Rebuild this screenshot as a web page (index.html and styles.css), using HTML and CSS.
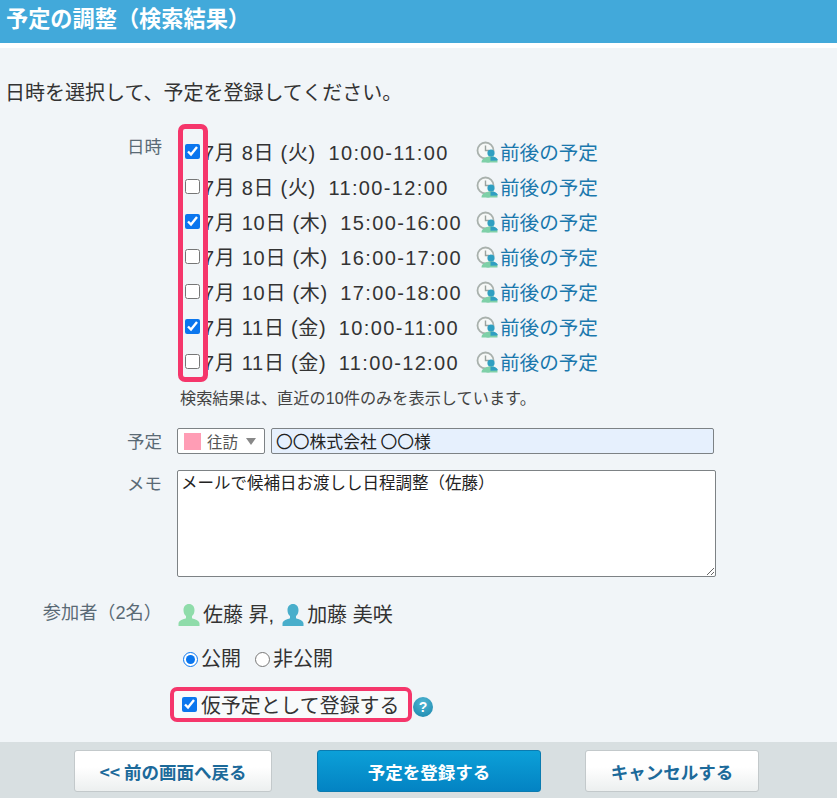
FILE: index.html
```html
<!DOCTYPE html>
<html lang="ja">
<head>
<meta charset="utf-8">
<title>予定の調整</title>
<link rel="stylesheet" href="styles.css">
</head>
<body>
<header class="title-bar"><h1>予定の調整（検索結果）</h1></header>
<main class="content">
  <p class="lead">日時を選択して、予定を登録してください。</p>
  <div class="form-row row-dates">
    <div class="label">日時</div>
    <div class="value">
      <div class="dates">
        <span class="highlight highlight-dates"></span>
        <div class="date-row"><input type="checkbox" class="check" checked><span class="date">7月 8日 (火)&nbsp; <span class="time">10:00-11:00</span></span><span class="link"><svg class="clock" viewBox="0 0 22 22"><use href="#clock-user"/></svg><a>前後の予定</a></span></div>
        <div class="date-row"><input type="checkbox" class="check"><span class="date">7月 8日 (火)&nbsp; <span class="time">11:00-12:00</span></span><span class="link"><svg class="clock" viewBox="0 0 22 22"><use href="#clock-user"/></svg><a>前後の予定</a></span></div>
        <div class="date-row"><input type="checkbox" class="check" checked><span class="date">7月 10日 (木)&nbsp; <span class="time">15:00-16:00</span></span><span class="link"><svg class="clock" viewBox="0 0 22 22"><use href="#clock-user"/></svg><a>前後の予定</a></span></div>
        <div class="date-row"><input type="checkbox" class="check"><span class="date">7月 10日 (木)&nbsp; <span class="time">16:00-17:00</span></span><span class="link"><svg class="clock" viewBox="0 0 22 22"><use href="#clock-user"/></svg><a>前後の予定</a></span></div>
        <div class="date-row"><input type="checkbox" class="check"><span class="date">7月 10日 (木)&nbsp; <span class="time">17:00-18:00</span></span><span class="link"><svg class="clock" viewBox="0 0 22 22"><use href="#clock-user"/></svg><a>前後の予定</a></span></div>
        <div class="date-row"><input type="checkbox" class="check" checked><span class="date">7月 11日 (金)&nbsp; <span class="time">10:00-11:00</span></span><span class="link"><svg class="clock" viewBox="0 0 22 22"><use href="#clock-user"/></svg><a>前後の予定</a></span></div>
        <div class="date-row"><input type="checkbox" class="check"><span class="date">7月 11日 (金)&nbsp; <span class="time">11:00-12:00</span></span><span class="link"><svg class="clock" viewBox="0 0 22 22"><use href="#clock-user"/></svg><a>前後の予定</a></span></div>
      </div>
      <p class="note">検索結果は、直近の10件のみを表示しています。</p>
    </div>
  </div>
  <div class="form-row row-title">
    <div class="label label-title">予定</div>
    <div class="value inline">
      <div class="menu"><span class="swatch"></span><span class="menu-text">往訪</span><span class="caret"></span></div>
      <input class="title-input" type="text" value="〇〇株式会社 〇〇様">
    </div>
  </div>
  <div class="form-row row-memo">
    <div class="label label-memo">メモ</div>
    <div class="value"><textarea class="memo">メールで候補日お渡しし日程調整（佐藤）</textarea></div>
  </div>
  <div class="form-row row-people">
    <div class="label label-people">参加者（2名）</div>
    <div class="value people">
      <svg class="user" viewBox="0 0 22 24"><use href="#user-shape" class="user-green"/></svg><span>佐藤 昇,</span>
      <svg class="user second" viewBox="0 0 22 24"><use href="#user-shape" class="user-blue"/></svg><span>加藤 美咲</span>
    </div>
  </div>
  <div class="form-row row-radio">
    <div class="label"></div>
    <div class="value radios">
      <label class="radio"><input type="radio" name="vis" checked>公開</label>
      <label class="radio"><input type="radio" name="vis">非公開</label>
    </div>
  </div>
  <div class="form-row row-tentative">
    <div class="label"></div>
    <div class="value tentative">
      <label class="tentative-box"><input type="checkbox" class="check" checked>仮予定として登録する</label>
      <span class="help">?</span>
    </div>
  </div>
</main>
<footer class="actions">
  <button class="btn btn-back" type="button">&lt;&lt; 前の画面へ戻る</button>
  <button class="btn btn-primary" type="button">予定を登録する</button>
  <button class="btn btn-cancel" type="button">キャンセルする</button>
</footer>
<svg class="defs" width="0" height="0" aria-hidden="true">
  <symbol id="clock-user" viewBox="0 0 22 22">
    <circle cx="9.500" cy="9.500" r="8" fill="#f6f8f7" stroke="#a9b1ad" stroke-width="1.800"/>
    <path d="M9.500 4.500v5h3.500" fill="none" stroke="#9aa39f" stroke-width="1.400"/>
    <circle cx="15" cy="12" r="3.600" fill="#2f9fc2"/>
    <path d="M5.500 21.500c0-3.300 2.800-4.500 5-5.200l3 .5v4.700z" fill="#7fd0a8"/>
    <path d="M10.500 21.500v-5.200c1-.6 1.800-.8 2.500-.8h4c2 .8 4.500 2 4.500 5v1z" fill="#7fd0a8"/>
    <path d="M14.500 15.500h3c1.500.5 3 1.200 4 2.800v1.200l-7 .2z" fill="#2f9fc2"/>
  </symbol>
  <symbol id="user-shape" viewBox="0 0 22 24">
    <path d="M11 1c3.300 0 5.500 2.500 5.500 6.200 0 2.500-1 4.600-2.500 5.800v2.200c2.500 1 7.500 1.900 7.500 5.300v2.500H.5V20.500c0-3.400 5-4.300 7.500-5.300V13C6.500 11.800 5.500 9.700 5.500 7.200 5.500 3.500 7.700 1 11 1z"/>
  </symbol>
</svg>
</body>
</html>
```
FILE: styles.css
```css
* { box-sizing: border-box; }
html, body { margin: 0; padding: 0; }
body {
  width: 837px;
  height: 798px;
  overflow: hidden;
  background: #f1f5f8;
  color: #333;
  font-family: "Liberation Sans", "Noto Sans CJK JP", sans-serif;
  display: flex;
  flex-direction: column;
}
.title-bar {
  height: 48px;
  background: #42a9da;
  border-bottom: 5px solid #fff;
  padding-left: 6px;
}
.title-bar h1 {
  margin: 0;
  font-size: 22.200px;
  line-height: 40px;
  font-weight: 700;
  color: #fff;
}
.content { flex: 1; }
.lead {
  margin: 31px 0 0 5px;
  font-size: 20px;
  line-height: 28px;
  height: 28px;
}
.form-row { display: flex; }
.label {
  width: 162px;
  flex: none;
  text-align: right;
  font-size: 17.500px;
  line-height: 24px;
  color: #5a6a75;
}
.label-title, .label-memo { padding-top: 2px; }
.label-people { font-size: 18.200px; padding-right: 0; }
.value { margin-left: 15px; }
.row-dates { margin-top: 27px; }
.row-dates .label { padding-top: 1px; }
.dates { position: relative; }
.highlight-dates {
  position: absolute;
  left: 1px;
  top: -10px;
  width: 30px;
  height: 258px;
  border: 5px solid #f5366b;
  border-radius: 7px;
}
.date-row {
  display: flex;
  align-items: center;
  height: 35px;
  font-size: 20px;
  letter-spacing: 0.7px;
  color: #333;
}
.time { letter-spacing: 1.350px; }
.check {
  width: 15px;
  height: 15px;
  margin: 0 3px 0 8px;
  flex: none;
  accent-color: #0b76ee;
}
.date { width: 273px; white-space: nowrap; }
.link { display: flex; align-items: center; letter-spacing: 0; }
.clock { width: 22px; height: 22px; margin-right: 2px; }
.link a { color: #1b78ad; font-size: 19.600px; }
.note {
  margin: 9px 0 0 3px;
  font-size: 16.200px;
  line-height: 20px;
  color: #444;
  white-space: nowrap;
}
.row-title { margin-top: 20px; }
.inline { display: flex; gap: 6px; margin-left: 15px; }
.menu {
  width: 88px;
  height: 26px;
  background: #fff;
  border: 1px solid #7d8285;
  border-radius: 2px;
  display: flex;
  align-items: center;
  padding-left: 6px;
  font-size: 15.500px;
  color: #555;
}
.swatch { width: 17px; height: 17px; background: #ff9db5; margin-right: 6px; }
.caret {
  margin-left: 8px;
  border-left: 5px solid transparent;
  border-right: 5px solid transparent;
  border-top: 7px solid #888;
}
.title-input {
  width: 443px;
  height: 26px;
  margin: 0;
  border: 1px solid #7d8285;
  border-radius: 2px;
  background: #e6f0fd;
  font: 16.800px "Noto Sans CJK JP", sans-serif;
  color: #222;
  padding: 0 4px;
}
.row-memo { margin-top: 16px; }
.memo {
  display: block;
  width: 539px;
  height: 107px;
  margin: 0;
  border: 1px solid #7d8285;
  border-radius: 2px;
  background: #fff;
  font: 16.500px/20px "Noto Sans CJK JP", sans-serif;
  color: #222;
  padding: 1px 3px;
}
.row-people { margin-top: 24px; }
.people {
  display: flex;
  align-items: center;
  font-size: 20px;
  line-height: 28px;
  color: #333;
  margin-left: 16px;
}
.user { width: 22px; height: 24px; margin-right: 3px; flex: none; }
.user.second { margin-left: 8px; }
.user-green { fill: #8fdcaa; }
.user-blue { fill: #49aecb; }
.row-radio { margin-top: 16px; }
.radios { display: flex; gap: 14px; margin-left: 21px; font-size: 20px; line-height: 28px; }
.radio { display: flex; align-items: center; }
.radio input { width: 15px; height: 15px; margin: 0 3px 0 0; accent-color: #0b76ee; }
.row-tentative { margin-top: 14px; }
.tentative { display: flex; align-items: center; margin-left: 8px; }
.tentative-box {
  display: flex;
  align-items: center;
  width: 242px;
  height: 35px;
  border: 4px solid #f5366b;
  border-radius: 7px;
  font-size: 19.900px;
  background: #f8fafb;
  color: #333;
}
.tentative-box .check { margin: 0 4px 0 8px; }
.help {
  width: 20px;
  height: 20px;
  margin-left: 1px;
  margin-top: 5px;
  border-radius: 50%;
  background: radial-gradient(circle at 50% 30%, #4fb6d4, #1a85ab);
  color: #fff;
  font: 700 14px/20px "Liberation Sans", sans-serif;
  text-align: center;
}
.actions {
  height: 56px;
  background: #d8dfe1;
  display: flex;
  gap: 44px;
  padding: 8px 0 0 74px;
}
.btn {
  height: 42px;
  border-radius: 3px;
  font: 700 17.500px "Noto Sans CJK JP", sans-serif;
  padding: 0;
}
.btn-back, .btn-cancel {
  background: linear-gradient(#fff 40%, #ecefef);
  border: 1px solid #c3c9cb;
  color: #1c6a9a;
}
.btn-back { width: 198px; margin-right: 1px; }
.btn-cancel { width: 174px; }
.btn-primary {
  width: 224px;
  background: linear-gradient(#0ca0d8, #0383c3);
  border: 1px solid #0b7bb0;
  color: #fff;
}
.defs { position: absolute; }
```
